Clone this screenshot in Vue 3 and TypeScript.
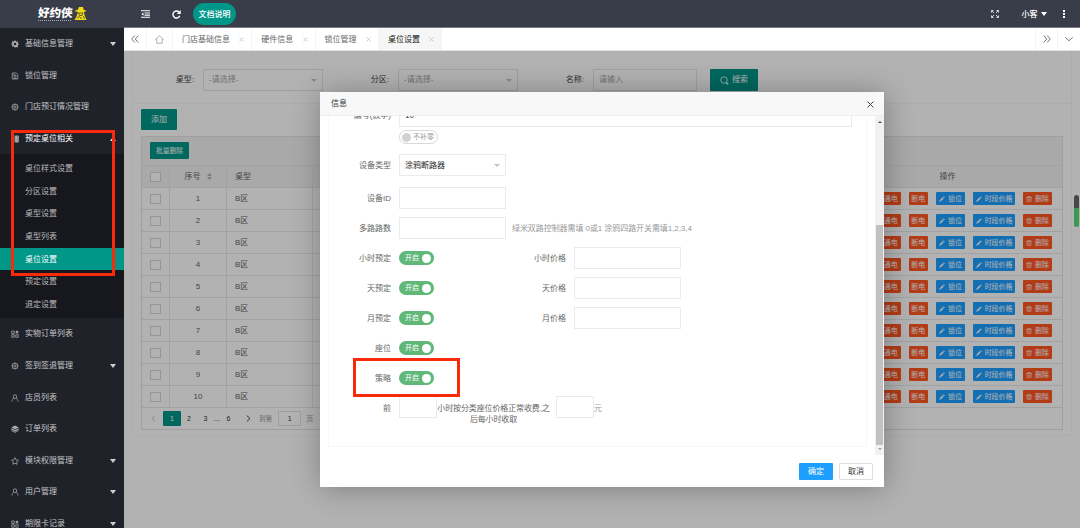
<script setup lang="ts">
interface MenuItem {
  label: string
  icon: string
  arrow?: 'down' | 'up'
  children?: string[]
}

const icons: Record<string, { d: string; fill?: boolean }> = {
  gearSolid: {
    fill: true,
    d: 'M6.8 1h2.4l.4 1.9 1.3.6 1.7-1.1 1.7 1.7-1.1 1.7.5 1.2 2 .5v2.2l-2 .5-.5 1.3 1.1 1.7-1.7 1.7-1.7-1.1-1.3.6L9.200 15H6.800l-.4-1.900-1.300-.6-1.700 1.100-1.700-1.700 1.100-1.700-.5-1.300-1.900-.4V6.900l1.900-.4.5-1.300-1.100-1.700 1.700-1.700 1.700 1.100 1.300-.5zM8 5.500A2.500 2.500 0 1 0 8 10.500 2.500 2.500 0 0 0 8 5.500z',
  },
  doc: { d: 'M2.500 2h8l3 3v9h-11zM5 7h6M5 10h6M5 12.500h6M5 4.500h3' },
  gear: {
    d: 'M8 2.500A5.500 5.500 0 1 0 8 13.500 5.500 5.500 0 0 0 8 2.500zM8 5.800A2.200 2.200 0 1 0 8 10.200 2.200 2.200 0 0 0 8 5.800zM8 .8v2M8 13.200v2M.8 8h2M13.200 8h2M2.900 2.900l1.400 1.400M11.700 11.700l1.400 1.400M2.900 13.100l1.400-1.400M11.700 4.300l1.400-1.400',
  },
  board: { d: 'M1.500 2h5M1.500 5h5M1.500 8h5M1.500 11h5M1.500 14h5M8.500 2h6v12h-6zM8.500 6h6M8.500 10h6M11.500 2v12' },
  blocks: { d: 'M1.500 2h5v5h-5zM1.500 9.500h5v5h-5zM9.500 9.500h5v5h-5zM12 1v6.500M8.800 4.200h6.400M10 2l4 4.500M14 2l-4 4.500' },
  user: { d: 'M8 1.500a3.500 3.800 0 1 0 0 7.600 3.500 3.800 0 1 0 0-7.600zM5.800 8.500C3.500 9.500 2.200 11.500 2 15M10.200 8.500c2.300 1 3.600 3 3.800 6.500' },
  layers: { fill: true, d: 'M8 1l7.500 3.800L8 8.600.5 4.800zM.5 6.500L8 10.200l7.500-3.700v2.600L8 12.800.5 9.100zM1 10.700l7 3.400 7-3.400v1.500l-7 3.300-7-3.300z' },
  star: { d: 'M8 1.300l2.100 4.400 4.700.7-3.400 3.400.8 4.800L8 12.300l-4.200 2.300.8-4.800L1.200 6.400l4.700-.7z' },
}

const menu: MenuItem[] = [
  { label: '基础信息管理', icon: 'gearSolid', arrow: 'down' },
  { label: '锁位管理', icon: 'doc' },
  { label: '门店预订情况管理', icon: 'gear' },
  {
    label: '预定桌位相关',
    icon: 'board',
    arrow: 'up',
    children: ['桌位样式设置', '分区设置', '桌型设置', '桌型列表', '桌位设置', '预定设置', '退定设置'],
  },
  { label: '实物订单列表', icon: 'blocks' },
  { label: '签到签退管理', icon: 'gear', arrow: 'down' },
  { label: '店员列表', icon: 'user' },
  { label: '订单列表', icon: 'layers' },
  { label: '模块权限管理', icon: 'star', arrow: 'down' },
  { label: '用户管理', icon: 'user', arrow: 'down' },
  { label: '期限卡记录', icon: 'blocks', arrow: 'down' },
]

const tabs = ['门店基础信息', '硬件信息', '锁位管理', '桌位设置']
const active = '桌位设置'
const rows = Array.from({ length: 10 }, (_, i) => i + 1)
const booking = [
  { label: '小时预定', price: '小时价格' },
  { label: '天预定', price: '天价格' },
  { label: '月预定', price: '月价格' },
  { label: '座位' },
  { label: '策略' },
]
</script>

<template>
  <div class="app">
    <aside class="side">
      <div class="logo">
        <div class="brand">
          <b>好约侠</b>
          <i></i>
        </div>
        <svg class="hero" viewBox="0 0 26 28">
          <path d="M10 0h8l1 5 6 3c-4 3-19 3-24 0l7-3z" fill="#f5dc10" />
          <path d="M8 10h12l1 6 4 10H1l4-7z" fill="#f5dc10" />
          <path d="M9 12h9l-2 5h-5zM6 22l6-3M19 18l2 6M12 22h4" fill="none" stroke="#393d49" stroke-width="1.600" />
        </svg>
      </div>
      <nav class="menu">
        <div v-for="item in menu" :key="item.label">
          <div class="item" :class="{ open: item.children }">
            <svg class="mi" viewBox="0 0 16 16">
              <path
                :d="icons[item.icon].d"
                :fill="icons[item.icon].fill ? 'currentColor' : 'none'"
                :stroke="icons[item.icon].fill ? 'none' : 'currentColor'"
                fill-rule="evenodd"
                stroke-width="1.500"
              />
            </svg>
            <span>{{ item.label }}</span>
            <em v-if="item.arrow" class="caret" :class="item.arrow"></em>
          </div>
          <div v-if="item.children" class="sub">
            <div v-for="c in item.children" :key="c" class="subitem" :class="{ on: c === active }">{{ c }}</div>
          </div>
        </div>
      </nav>
      <div class="mark side-mark"></div>
    </aside>

    <div class="right">
      <header class="top">
        <svg class="ic-shrink" viewBox="0 0 18 16" fill="none" stroke="#fff" stroke-width="2.200">
          <path d="M0 1.500h18M7 6h11M7 10.300h11M0 14.500h18" />
          <path d="M5 5v6.500L.5 8.200z" fill="#fff" stroke="none" />
        </svg>
        <svg class="ic-refresh" viewBox="0 0 18 18" fill="none" stroke="#fff" stroke-width="2.800">
          <path d="M15.500 11.500A7 7 0 1 1 14 4.200" />
          <path d="M17.500 0v8h-8z" fill="#fff" stroke="none" />
        </svg>
        <span class="pill">文档说明</span>
        <span class="grow"></span>
        <svg class="ic-full" viewBox="0 0 16 16" fill="none" stroke="#e4e5e7" stroke-width="1.800">
          <path d="M1 5V1h4M11 1h4v4M15 11v4h-4M5 15H1v-4M1 1l5 5M15 1l-5 5M15 15l-5-5M1 15l5-5" />
        </svg>
        <span class="me">小客</span>
        <em class="caret down white"></em>
        <span class="dots"><i></i><i></i><i></i></span>
      </header>

      <div class="tabs">
        <div class="tbtn first">
          <svg viewBox="0 0 16 16" fill="none" stroke="#555" stroke-width="1.600"><path d="M7.500 1L1.500 8l6 7M14.500 1l-6 7 6 7" /></svg>
        </div>
        <div class="tbtn home">
          <svg viewBox="0 0 18 18" fill="none" stroke="#888" stroke-width="1.300"><path d="M.8 9.200L9 1.200l8.200 8M3.500 7.500V16.500h11V7.500" /></svg>
        </div>
        <div v-for="t in tabs" :key="t" class="tab" :class="{ on: t === active }">
          <span>{{ t }}</span>
          <svg viewBox="0 0 10 10" stroke="#bbb" stroke-width="1.500"><path d="M1 1l8 8M9 1L1 9" /></svg>
        </div>
        <span class="grow"></span>
        <div class="tbtn next">
          <svg viewBox="0 0 16 16" fill="none" stroke="#555" stroke-width="1.600"><path d="M1.500 1l6 7-6 7M8.500 1l6 7-6 7" /></svg>
        </div>
        <div class="tbtn more">
          <svg viewBox="0 0 16 16" fill="none" stroke="#555" stroke-width="1.600"><path d="M.5 4.500l7.500 7 7.500-7" /></svg>
        </div>
      </div>

      <main class="main">
        <div class="card">
          <div class="filters">
            <label class="f1">桌型:</label>
            <div class="box sel">-请选择-<em class="caret down grey"></em></div>
            <label class="f2">分区:</label>
            <div class="box sel">-请选择-<em class="caret down grey"></em></div>
            <label class="f3">名称:</label>
            <div class="box inp">请输入</div>
            <div class="search">
              <svg viewBox="0 0 18 18" fill="none" stroke="#fff" stroke-width="1.600"><circle cx="8" cy="8" r="6.500" /><path d="M12.500 13l4 4" stroke-width="2.500" /></svg>
              搜索
            </div>
          </div>
          <div class="listing">
            <div class="add">添加</div>
            <div class="table">
              <div class="toolbar"><span>批量删除</span></div>
              <div class="tr th">
                <div class="c-check"><i></i></div>
                <div class="c-no">
                  <span>序号</span>
                  <svg viewBox="0 0 10 14" fill="#b2b2b2"><path d="M5 0l5 6H0zM5 14L0 8h10z" /></svg>
                </div>
                <div class="c-type">桌型</div>
                <div class="c-gap"></div>
                <div class="c-op head">操作</div>
              </div>
              <div v-for="n in rows" :key="n" class="tr">
                <div class="c-check"><i></i></div>
                <div class="c-no">{{ n }}</div>
                <div class="c-type">B区</div>
                <div class="c-gap"></div>
                <div class="c-op">
                  <span class="btn red w20">通电</span>
                  <span class="btn red w20">断电</span>
                  <span class="btn blue w29">
                    <svg viewBox="0 0 12 12" fill="#fff"><path d="M9.500.3l2.200 2.200-1.500 1.500L8 1.800zM7.200 2.600l2.200 2.200L3.700 10.500.5 11.500l1-3.200z" /></svg>锁位
                  </span>
                  <span class="btn blue w42">
                    <svg viewBox="0 0 12 12" fill="#fff"><path d="M9.500.3l2.200 2.200-1.500 1.500L8 1.800zM7.200 2.600l2.200 2.200L3.700 10.500.5 11.500l1-3.200z" /></svg>时段价格
                  </span>
                  <span class="btn red w29">
                    <svg viewBox="0 0 12 12" fill="none" stroke="#fff" stroke-width="1.200"><path d="M0 2.800h12M4 2.500V.8h4v1.700M1.800 3l.7 8.300h7l.7-8.300M4.700 5v4M7.300 5v4" /></svg>删除
                  </span>
                </div>
              </div>
              <div class="pager">
                <svg class="prev" viewBox="0 0 10 14" fill="none" stroke="#bbb" stroke-width="1.800"><path d="M8.500 1L2 7l6.500 6" /></svg>
                <b>1</b>
                <span class="p2">2</span>
                <span class="p3">3</span>
                <span class="pe">...</span>
                <span class="p6">6</span>
                <svg class="nxt" viewBox="0 0 10 14" fill="none" stroke="#333" stroke-width="1.800"><path d="M1.500 1L8 7l-6.500 6" /></svg>
                <span class="to">到第</span>
                <span class="pin">1</span>
                <span class="pg">页</span>
              </div>
            </div>
          </div>
        </div>

        <div class="shade"></div>

        <section class="dialog">
          <div class="title">
            <span>信息</span>
            <svg viewBox="0 0 12 12" stroke="#3a3f4d" stroke-width="1.700"><path d="M1 1l10 10M11 1L1 11" /></svg>
          </div>
          <div class="body">
            <div class="scroll">
              <div class="form">
                <div class="row r0"><label>编号(数字)</label><div class="in wide">10</div></div>
                <div class="pad"><span class="switch off"><i></i>不补零</span></div>
                <div class="row type"><label>设备类型</label><div class="in dark">涂鸦断路器<em class="caret down grey"></em></div></div>
                <div class="row"><label>设备ID</label><div class="in"></div></div>
                <div class="row"><label>多路路数</label><div class="in"></div><span class="help">绿米双路控制器需填 0或1 涂鸦四路开关需填1,2,3,4</span></div>
                <div v-for="b in booking" :key="b.label" class="row">
                  <label>{{ b.label }}</label>
                  <span class="switch">开启<i></i></span>
                  <template v-if="b.price">
                    <label class="price">{{ b.price }}</label>
                    <div class="in"></div>
                  </template>
                </div>
                <div class="row last">
                  <label>前</label>
                  <div class="in short"></div>
                  <span class="mid">小时按分类座位价格正常收费,之后每小时收取</span>
                  <div class="in short"></div>
                  <span class="yuan">元</span>
                </div>
              </div>
            </div>
            <div class="bar">
              <em class="up"></em>
              <div class="thumb"></div>
              <em class="dn"></em>
            </div>
          </div>
          <div class="foot">
            <span class="ok">确定</span>
            <span class="cancel">取消</span>
          </div>
          <div class="mark row-mark"></div>
        </section>
        <div class="float-bar"></div>
      </main>
    </div>
  </div>
</template>

<style>
body {
  overflow: hidden;
}
</style>

<style scoped>
.app,
.app * {
  box-sizing: border-box;
}
.app {
  display: flex;
  width: 1080px;
  height: 528px;
  overflow: hidden;
  font: 8px/12px 'Liberation Sans', 'Noto Sans CJK SC', sans-serif;
  color: #666;
  white-space: nowrap;
}
svg {
  display: block;
  flex: none;
}
.grow {
  flex: 1;
}
.caret {
  width: 0;
  height: 0;
  border: 3.5px solid transparent;
  flex: none;
}
.caret.down {
  border-top-color: #cfd0d2;
  border-bottom-width: 0;
}
.caret.up {
  border-bottom-color: #fff;
  border-top-width: 0;
}
.caret.white {
  border-top-color: #fff;
}
.caret.grey {
  border-width: 3px;
  border-bottom-width: 0;
  border-top-color: #c2c2c2;
}
.item .caret,
.caret.white {
  border-left-width: 3px;
  border-right-width: 3px;
}
.item .caret.down,
.caret.white {
  border-top-width: 4px;
}
.item .caret.up {
  border-bottom-width: 4px;
}
.mark {
  position: absolute;
  border: 3px solid #f92a0c;
}

/* sidebar */
.side {
  position: relative;
  width: 124px;
  height: 528px;
  flex: none;
  background: #20222a;
  overflow: hidden;
}
.logo {
  height: 28px;
  background: #393d49;
  display: flex;
  padding: 7px 0 0 38px;
}
.brand b {
  display: block;
  font-size: 11.500px;
  line-height: 13px;
  font-weight: 900;
  color: #fff;
  transform: skewX(-5deg);
}
.brand i {
  display: block;
  width: 33px;
  border-top: 1px dotted #aaadb5;
}
.hero {
  width: 13px;
  height: 14px;
  margin: 0 0 0 1px;
}
.item {
  display: flex;
  align-items: center;
  height: 31.600px;
  padding: 1px 8px 0 11px;
  color: #c4c5c8;
}
.item.open {
  color: #fff;
}
.item span {
  flex: 1;
}
.mi {
  width: 8px;
  height: 8px;
  margin-right: 6px;
  opacity: 0.85;
}
.sub {
  background: #17181e;
  padding: 3px 0;
}
.subitem {
  height: 22.540px;
  line-height: 22.500px;
  padding: 1px 0 0 25px;
  color: #b9babc;
}
.subitem.on {
  background: #009688;
  color: #fff;
}
.side-mark {
  left: 11px;
  top: 130px;
  width: 104px;
  height: 146px;
}

/* header */
.right {
  width: 956px;
  flex: none;
}
.top {
  height: 28px;
  background: #393d49;
  border-bottom: 1px solid #777a82;
  display: flex;
  align-items: center;
  padding: 1px 14px 0 17px;
  color: #fff;
}
.ic-shrink {
  width: 9px;
  height: 8px;
}
.ic-refresh {
  width: 9px;
  height: 9px;
  margin-left: 22px;
}
.pill {
  width: 43px;
  height: 22px;
  line-height: 23px;
  margin-left: 12px;
  border-radius: 11px;
  background: #009688;
  text-align: center;
  font-weight: 500;
}
.ic-full {
  width: 8px;
  height: 8px;
  margin-right: 22px;
}
.me {
  margin-right: 4px;
  padding-top: 1px;
  font-weight: 500;
}
.dots {
  display: flex;
  flex-direction: column;
  gap: 1.500px;
  margin: 0 1px 0 16px;
}
.dots i {
  width: 1.600px;
  height: 1.600px;
  background: #fff;
}

/* tabs */
.tabs {
  height: 23px;
  background: #fff;
  border-bottom: 1px solid #e2e2e2;
  display: flex;
}
.tbtn {
  display: flex;
  align-items: center;
  justify-content: center;
  border-right: 1px solid #f4f4f4;
}
.tbtn svg {
  width: 8px;
  height: 8px;
}
.first {
  width: 23px;
}
.home {
  width: 26px;
}
.home svg {
  width: 9px;
  height: 9px;
}
.next {
  width: 23px;
  border-left: 1px solid #f4f4f4;
}
.more {
  width: 22px;
  border: 0;
}
.tab {
  display: flex;
  align-items: center;
  padding: 1px 7px 0 9px;
  border-right: 1px solid #f4f4f4;
}
.tab svg {
  width: 5px;
  height: 5px;
  margin-left: 9.300px;
}
.tab.on {
  background: #f6f6f6;
  color: #111;
}

/* page */
.main {
  position: relative;
  height: 477px;
  background: #fff;
  overflow: hidden;
}
.card {
  width: 940px;
  height: 385px;
  margin-left: 8px;
  border: 1px solid #f7f7f7;
  border-top: 0;
}
.filters {
  height: 53px;
  padding: 18px 0 12px;
  border-bottom: 1px solid #f6f6f6;
  display: flex;
  align-items: center;
}
.filters label {
  text-align: right;
  color: #444;
}
.box {
  height: 22px;
  border: 1px solid #e4e4e4;
  display: flex;
  align-items: center;
  color: #a4a4a4;
  margin-left: 9px;
  padding-left: 5px;
}
.sel {
  width: 120px;
  justify-content: space-between;
  padding-right: 5px;
}
.inp {
  width: 104px;
}
.f1 {
  width: 61px;
}
.f2 {
  width: 66px;
}
.f3 {
  width: 66px;
}
.search {
  width: 48px;
  height: 22px;
  margin-left: 13px;
  background: #009688;
  border-radius: 1px;
  color: #fff;
  display: flex;
  align-items: center;
  justify-content: center;
  gap: 3px;
}
.search svg {
  width: 9px;
  height: 9px;
}
.listing {
  padding: 5px 8px 0;
}
.add {
  width: 36px;
  height: 21px;
  line-height: 22px;
  background: #009688;
  border-radius: 1px;
  color: #fff;
  text-align: center;
}
.table {
  width: 922px;
  margin-top: 6px;
  border: 1px solid #e4e4e4;
}
.toolbar {
  height: 29px;
  background: #f2f2f2;
  border-bottom: 1px solid #e8e8e8;
  padding: 5px 8px;
}
.toolbar span {
  display: block;
  width: 39px;
  height: 17px;
  line-height: 17px;
  background: #009688;
  border-radius: 1px;
  color: #fff;
  text-align: center;
  font-size: 6.800px;
}
.tr {
  display: flex;
  height: 22px;
  border-bottom: 1px solid #e8e8e8;
}
.tr > div {
  display: flex;
  align-items: center;
  border-right: 1px solid #e8e8e8;
}
.th {
  background: #f2f2f2;
}
.c-check {
  width: 28px;
  padding-left: 8px;
}
.c-check i {
  width: 11px;
  height: 10px;
  border: 1px solid #d6d6d6;
  background: #fff;
}
.c-no {
  width: 57px;
  justify-content: center;
}
.c-no svg {
  width: 5px;
  height: 7px;
  margin-left: 6px;
}
.c-type {
  width: 86px;
  padding-left: 8px;
}
.c-gap {
  flex: 1;
}
.tr > .c-op {
  width: 229px;
  border-right: 0;
  justify-content: flex-end;
  gap: 8px;
  padding-right: 10px;
}
.tr > .c-op.head {
  justify-content: center;
  padding: 0;
}
.btn {
  height: 13px;
  border-radius: 1px;
  color: #fff;
  font-size: 6.900px;
  display: flex;
  align-items: center;
  justify-content: center;
  gap: 3px;
}
.btn svg {
  width: 6px;
  height: 6px;
}
.red {
  background: #ff5722;
}
.blue {
  background: #1e9fff;
}
.w20 {
  width: 19.500px;
}
.w29 {
  width: 29px;
}
.w42 {
  width: 42px;
}
.pager {
  height: 21px;
  display: flex;
  align-items: center;
  color: #333;
  font-size: 7px;
}
.pager svg {
  width: 5px;
  height: 7px;
}
.prev {
  margin-left: 9px;
}
.pager b {
  width: 18px;
  height: 15px;
  line-height: 15px;
  margin-left: 7px;
  background: #009688;
  border-radius: 1px;
  color: #fff;
  font-weight: 400;
  text-align: center;
}
.pager .p2,
.pager .p3,
.pager .pe,
.pager .p6 {
  text-align: center;
}
.p2 {
  width: 16px;
}
.p3 {
  width: 17px;
}
.pe {
  width: 6px;
}
.p6 {
  width: 17px;
}
.nxt {
  margin-left: 9px;
}
.to {
  color: #999;
  font-size: 6.600px;
  margin-left: 8px;
}
.pin {
  width: 23px;
  height: 15px;
  line-height: 13px;
  border: 1px solid #e2e2e2;
  text-align: center;
  margin-left: 6px;
}
.pg {
  color: #999;
  margin-left: 5px;
}
.shade {
  position: absolute;
  inset: 0;
  background: rgba(0, 0, 0, 0.3);
}

/* dialog */
.dialog {
  position: absolute;
  left: 196px;
  top: 41px;
  width: 564px;
  height: 395px;
  background: #fff;
  box-shadow: 1px 1px 28px rgba(0, 0, 0, 0.3);
}
.title {
  height: 24px;
  background: #f8f8f8;
  border-bottom: 1px solid #eee;
  padding: 1px 10px 0 11px;
  display: flex;
  align-items: center;
  justify-content: space-between;
  color: #333;
}
.title svg {
  width: 7px;
  height: 7px;
}
.body {
  height: 339px;
  display: flex;
}
.scroll {
  flex: 1;
  height: 339px;
  overflow: hidden;
}
.form {
  width: 539px;
  height: 343px;
  margin: -12px 0 0 8px;
  border: 1px solid #f8f8f8;
}
.row {
  display: flex;
  align-items: center;
  height: 30px;
}
.row label {
  width: 62px;
  margin-right: 8px;
  text-align: right;
}
.row label.price {
  width: 132px;
}
.in {
  width: 107px;
  height: 22px;
  border: 1px solid #ebebeb;
  display: flex;
  align-items: center;
  justify-content: space-between;
  padding: 1px 5px 0;
  margin-bottom: 2px;
}
.in.wide {
  width: 453px;
  color: #333;
  margin-bottom: 0;
}
.in.dark {
  color: #222;
}
.row.r0 {
  height: 21px;
}
.pad {
  height: 25px;
  padding: 4px 0 0 70px;
}
.row.type {
  margin-bottom: 3px;
}
.help {
  color: #999;
  margin-left: 6px;
  letter-spacing: -0.070px;
}
.switch {
  width: 35px;
  height: 14px;
  margin-bottom: 2px;
  border-radius: 7px;
  background: #5fb878;
  color: #fff;
  font-size: 7px;
  display: flex;
  align-items: center;
  justify-content: space-between;
  padding: 0 3px 0 6px;
}
.switch i {
  width: 9px;
  height: 9px;
  border-radius: 50%;
  background: #fff;
}
.switch.off {
  width: 39px;
  border: 1px solid #d8d8d8;
  background: #fff;
  color: #999;
  padding: 0 3px 0 2px;
}
.switch.off i {
  background: #d2d2d2;
}
.row.last {
  height: 29px;
}
.in.short {
  width: 38px;
  margin-bottom: 3px;
}
.mid {
  width: 113px;
  height: 24px;
  margin-top: 12px;
  white-space: normal;
  text-align: center;
  line-height: 11.500px;
  letter-spacing: -0.130px;
  margin-right: 6px;
}
.yuan {
  color: #999;
}
.bar {
  width: 9px;
  background: #f1f1f1;
  display: flex;
  flex-direction: column;
  align-items: center;
}
.bar em {
  border: 2px solid transparent;
}
.bar .up {
  border-top-width: 0;
  border-bottom-color: #505050;
  margin-top: 5px;
}
.bar .dn {
  border-bottom-width: 0;
  border-top-color: #999;
  margin-top: 3px;
}
.thumb {
  width: 7px;
  height: 220px;
  margin-top: 102px;
  background: #c1c1c1;
}
.foot {
  display: flex;
  justify-content: flex-end;
  gap: 6px;
  padding: 8px 11px 0 0;
}
.foot span {
  width: 34px;
  height: 17px;
  line-height: 17px;
  border-radius: 1px;
  text-align: center;
}
.ok {
  background: #1e9fff;
  color: #fff;
}
.foot .cancel {
  border: 1px solid #dedede;
  line-height: 15px;
  color: #333;
}
.row-mark {
  left: 33px;
  top: 266px;
  width: 107px;
  height: 39px;
}
.float-bar {
  position: absolute;
  left: 950px;
  top: 144px;
  width: 5px;
  height: 32px;
  border-radius: 2.500px;
  background: linear-gradient(#474747 40%, #3c9a50 41%);
}
</style>
